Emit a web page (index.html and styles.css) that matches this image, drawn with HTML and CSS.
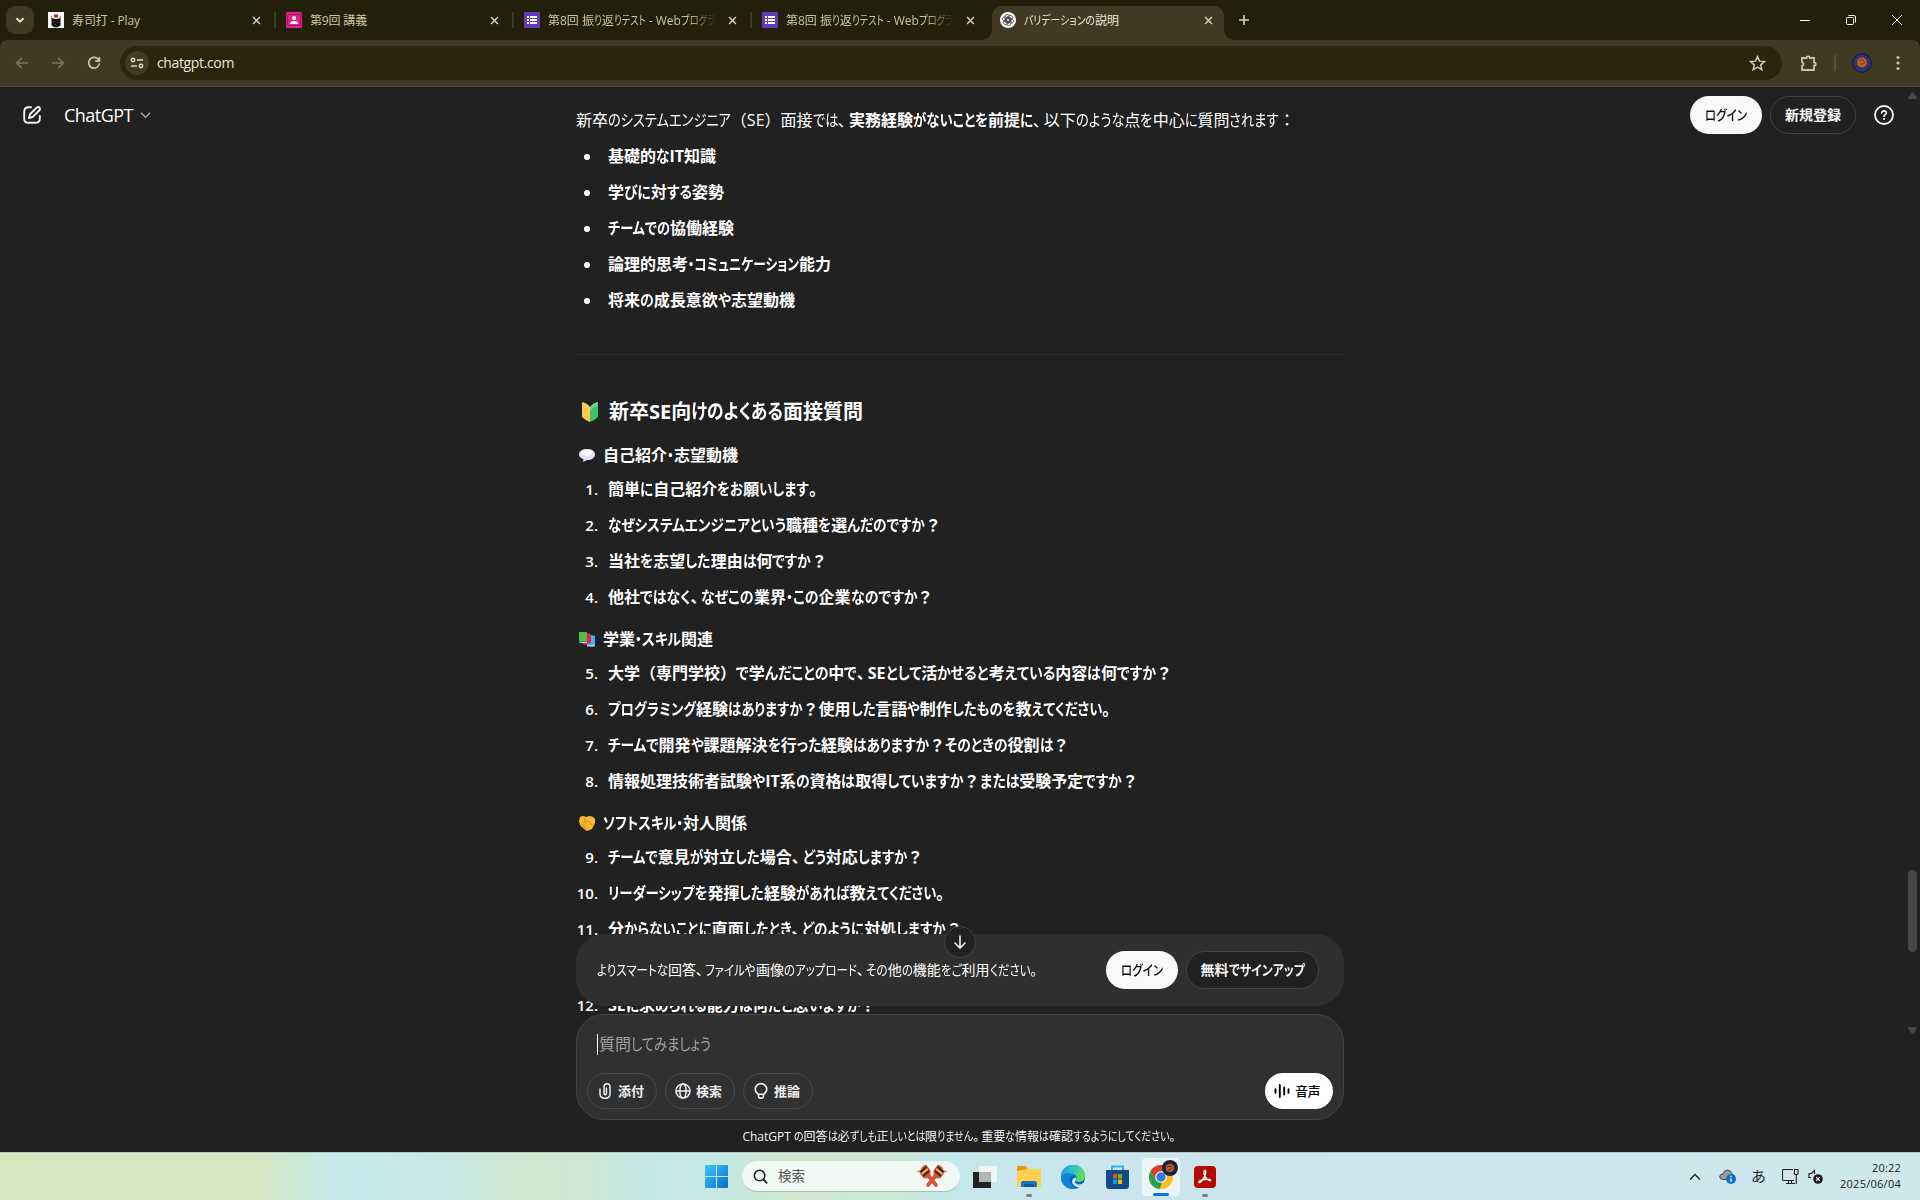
FILE: index.html
```html
<!DOCTYPE html>
<html lang="ja">
<head>
<meta charset="utf-8">
<title>バリデーションの説明</title>
<link rel="stylesheet" href="styles.css">
</head>
<body>
<div class="tabstrip">
  <div class="tab-search"><svg width="12" height="12" viewBox="0 0 12 12"><path d="M2.5 4.2 6 7.6l3.5-3.4" fill="none" stroke="#e8e3d0" stroke-width="2"/></svg></div>
  <div class="tab first">
    <svg class="fav" viewBox="0 0 16 16"><path fill="#fff" d="M0 0h16v16H0z"/><path fill="#111" d="M3.500 4q4.500-4 9 0v9.500q-4.500 4-9 0z"/><path fill="#f4f4f4" d="M4 3q4-3.500 8 0v3q-4 2-8 0z"/><path fill="#c22" d="M6 2.500h4v3H6z"/><path stroke="#555" d="M5 9l1 1m3 0 1 1m-3 1 1 1"/></svg>
    <span class="tab-title"><span data-w="68">寿司打 - Play</span></span><svg class="x" viewBox="0 0 10 10"><path d="M1.2 1.2l7.6 7.6m0-7.6L1.2 8.8"/></svg>
  </div>
  <div class="tab sep">
    <svg class="fav" viewBox="0 0 16 16"><rect width="16" height="16" rx="1.5" fill="#e0218a"/><path fill="none" stroke="#a8115f" d="M1.5 2.5h13v11h-13z"/><circle cx="8" cy="6" r="2" fill="#fff"/><path fill="#fff" d="M4 12q0-3 4-3t4 3z"/></svg>
    <span class="tab-title"><span data-w="57">第9回 講義</span></span><svg class="x" viewBox="0 0 10 10"><path d="M1.2 1.2l7.6 7.6m0-7.6L1.2 8.8"/></svg>
  </div>
  <div class="tab sep">
    <svg class="fav" viewBox="0 0 16 16"><rect width="16" height="16" rx="1" fill="#673ab7"/><path fill="#fff" d="M3 4h2v2H3zm3 0h7v2H6zM3 7h2v2H3zm3 0h7v2H6zM3 10h2v2H3zm3 0h7v2H6z"/></svg>
    <span class="tab-title fade"><span data-w="167">第8回 振り返りテスト - Webプログラ</span></span><svg class="x" viewBox="0 0 10 10"><path d="M1.2 1.2l7.6 7.6m0-7.6L1.2 8.8"/></svg>
  </div>
  <div class="tab sep">
    <svg class="fav" viewBox="0 0 16 16"><rect width="16" height="16" rx="1" fill="#673ab7"/><path fill="#fff" d="M3 4h2v2H3zm3 0h7v2H6zM3 7h2v2H3zm3 0h7v2H6zM3 10h2v2H3zm3 0h7v2H6z"/></svg>
    <span class="tab-title fade"><span data-w="167">第8回 振り返りテスト - Webプログラ</span></span><svg class="x" viewBox="0 0 10 10"><path d="M1.2 1.2l7.6 7.6m0-7.6L1.2 8.8"/></svg>
  </div>
  <div class="tab active">
    <svg class="fav" viewBox="0 0 16 16"><circle cx="8" cy="8" r="8" fill="#fff"/><g fill="none" stroke="#333" stroke-width=".7"><rect x="5" y="2.4" width="4.4" height="8" rx="2.2"/><rect x="5" y="2.4" width="4.4" height="8" rx="2.2" transform="rotate(60 8 8)"/><rect x="5" y="2.4" width="4.4" height="8" rx="2.2" transform="rotate(120 8 8)"/><rect x="5" y="2.4" width="4.4" height="8" rx="2.2" transform="rotate(180 8 8)"/><rect x="5" y="2.4" width="4.4" height="8" rx="2.2" transform="rotate(240 8 8)"/><rect x="5" y="2.4" width="4.4" height="8" rx="2.2" transform="rotate(300 8 8)"/></g></svg>
    <span class="tab-title"><span data-w="95">バリデーションの説明</span></span><svg class="x" viewBox="0 0 10 10"><path d="M1.2 1.2l7.6 7.6m0-7.6L1.2 8.8"/></svg>
  </div>
  <svg class="newtab" viewBox="0 0 12 12"><path d="M6 1v10M1 6h10"/></svg>
  <div class="wincontrols">
    <svg viewBox="0 0 10 10"><path d="M0 5.5h10"/></svg>
    <svg viewBox="0 0 10 10"><rect x=".5" y="2.5" width="7" height="7" rx="1"/><path d="M2.5.5H8a1.5 1.5 0 0 1 1.500 1.500V7.500"/></svg>
    <svg viewBox="0 0 10 10"><path d="M0 0l10 10M10 0L0 10"/></svg>
  </div>
</div>
<div class="toolbar-wrap">
<div class="toolbar">
  <svg class="nav dim" viewBox="0 0 16 16"><path d="M14 8H3M8 2.700 2.700 8 8 13.300"/></svg>
  <svg class="nav dim" viewBox="0 0 16 16"><path d="M2 8h11M8 2.700 13.300 8 8 13.300"/></svg>
  <svg class="nav" viewBox="0 0 16 16"><path d="M12.800 5.200A5.400 5.400 0 1 0 13.400 8.500M13.400 2v4.100H9.200" stroke-width="1.700"/></svg>
  <div class="omnibox">
    <div class="siteinfo"><svg width="14" height="12" viewBox="0 0 14 12"><g fill="none" stroke="#ded9c4" stroke-width="1.500"><circle cx="3" cy="3" r="1.700"/><path d="M7 3h6M1 9h6"/><circle cx="11" cy="9" r="1.700"/></g></svg></div>
    <span class="url" data-w="77">chatgpt.com</span>
    <svg class="star" viewBox="0 0 16 16"><path d="M8 1.500l1.900 4.300 4.700.4-3.600 3.100 1.100 4.600L8 11.500l-4.100 2.400L5 9.300 1.400 6.200l4.700-.4z"/></svg>
  </div>
  <svg class="ext" viewBox="0 0 18 18"><path d="M2 4h4.500a1.700 1.700 0 0 1 3.400 0H14v4.300a1.700 1.700 0 0 1 0 3.400V16H2v-4q3-2 0-4z"/></svg>
  <i class="bar"></i>
  <svg class="avatar" viewBox="0 0 20 20"><circle cx="10" cy="10" r="10" fill="#1d2035"/><circle cx="10" cy="10" r="8.500" fill="#2c3478"/><circle cx="10" cy="9.500" r="5" fill="#bd5f1d"/><path d="M7 8q3-3 5 0M8 11q3 1 5-2" stroke="#7d3010" fill="none"/></svg>
  <svg class="dots" viewBox="0 0 4 16"><circle cx="2" cy="2.500" r="1.600"/><circle cx="2" cy="8" r="1.600"/><circle cx="2" cy="13.500" r="1.600"/></svg>
</div>
</div>

<main class="page">
  <article class="answer">
    <p class="lead"><span data-w="270">新卒のシステムエンジニア（SE）面接では、</span><b data-w="184">実務経験がないことを前提に</b><span data-w="262">、以下のような点を中心に質問されます：</span></p>
    <ul>
      <li><b data-w="108">基礎的なIT知識</b></li>
      <li><b data-w="116">学びに対する姿勢</b></li>
      <li><b data-w="126">チームでの協働経験</b></li>
      <li><b data-w="223">論理的思考・コミュニケーション能力</b></li>
      <li><b data-w="187">将来の成長意欲や志望動機</b></li>
    </ul>
    <hr>
    <h3><svg class="mark" viewBox="0 0 18 20"><path fill="#fdc94c" d="M1 0q5 1 8 5v15q-4-1-8-5z"/><path fill="#3fc26b" d="M17 0q-5 1-8 5v15q4-1 8-5z"/><path fill="#64d58b" d="M17 0q-5 1-8 5v4q3-4 8-5z"/></svg><span data-w="254">新卒SE向けのよくある面接質問</span></h3>
    <h4><svg class="emo" viewBox="0 0 16 16"><path fill="#e7dff4" d="M8 2c5 0 8 2 8 5.500S12.500 13 8 13l-4 2 .5-2.700C1.500 11 0 9.500 0 7.500 0 4 3.500 2 8 2z"/><path fill="#fbf8ff" d="M8 3c3 0 5 1 5 3s-3 3-6 3-5-1-5-2.500S5 3 8 3z"/></svg><span data-w="135">自己紹介・志望動機</span></h4>
    <ol>
      <li><b data-w="209">簡単に自己紹介をお願いします。</b></li>
      <li><b data-w="333">なぜシステムエンジニアという職種を選んだのですか？</b></li>
      <li><b data-w="219">当社を志望した理由は何ですか？</b></li>
      <li><b data-w="325">他社ではなく、なぜこの業界・この企業なのですか？</b></li>
    </ol>
    <h4><svg class="emo" viewBox="0 0 16 16"><path fill="#55b947" d="M0 1h8v9H0z"/><path fill="#3d9b3f" d="M0 10h8v2H0z"/><path fill="#dc2456" d="M8 2l4 1v10l-7 1-2-2h5z"/><path fill="#3fb4ee" d="M12 4l4 1v9H8v-1l4-1z"/><path fill="#d5c8f0" d="M8 14h8v1.500H8zM1 11h7v1H2z"/></svg><span data-w="110">学業・スキル関連</span></h4>
    <ol start="5">
      <li><b data-w="564">大学（専門学校）で学んだことの中で、SEとして活かせると考えている内容は何ですか？</b></li>
      <li><b data-w="502">プログラミング経験はありますか？使用した言語や制作したものを教えてください。</b></li>
      <li><b data-w="461">チームで開発や課題解決を行った経験はありますか？そのときの役割は？</b></li>
      <li><b data-w="530">情報処理技術者試験やIT系の資格は取得していますか？または受験予定ですか？</b></li>
    </ol>
    <h4><svg class="emo" viewBox="0 0 16 16"><path fill="#fbb92f" d="M1 2q3-2 6 0l3-1q4 0 6 3v4l-3 6-5 2-3-2-4-4-1-4z"/><path fill="none" stroke="#c97d12" stroke-width=".8" d="M7 3 4.500 7q2 1 4-1.500l5 5M3 9l4 5M5 8.500l4 4"/></svg><span data-w="144">ソフトスキル・対人関係</span></h4>
    <ol start="9">
      <li><b data-w="315">チームで意見が対立した場合、どう対応しますか？</b></li>
      <li><b data-w="336">リーダーシップを発揮した経験があれば教えてください。</b></li>
      <li><b data-w="354">分からないことに直面したとき、どのように対処しますか？</b></li>
    </ol>
    <ol start="12" class="after">
      <li><b data-w="268">SEに求められる能力は何だと思いますか？</b></li>
    </ol>
  </article>

  <header class="top">
    <svg class="compose" viewBox="0 0 18 18"><g fill="none" stroke="#f2f2f2" stroke-width="1.900" stroke-linecap="round" stroke-linejoin="round"><path d="M8 1.300H5.500Q1.200 1.300 1.200 6v6.500q0 4.300 4.300 4.300H12q4.800 0 4.800-4.300V10"/><path d="M13.800 1.500q2-1 2.900.4.800 1.400-.5 2.600L9.800 10.900l-3.800 1.200 1-3.900z"/></g></svg>
    <span class="brand" data-w="69">ChatGPT</span>
    <svg class="chev" viewBox="0 0 12 8"><path d="M1 1.500l5 5 5-5" fill="none" stroke="#a8a8a8" stroke-width="1.400"/></svg>
    <span class="btn light push"><span data-w="42">ログイン</span></span>
    <span class="btn outline signup"><span data-w="56">新規登録</span></span>
    <svg class="help" viewBox="0 0 20 20"><circle cx="10" cy="10" r="9" fill="none" stroke="#f5f5f5" stroke-width="1.800"/><path d="M7.700 8q.2-2.200 2.400-2.200 2.200.1 2.200 2 0 1.200-1.300 1.900-1 .5-1 1.600" fill="none" stroke="#f5f5f5" stroke-width="1.700" stroke-linecap="round"/><circle cx="10" cy="14" r="1.100" fill="#f5f5f5"/></svg>
  </header>

  <div class="scrollbar"><svg width="9" height="7" viewBox="0 0 9 7"><path fill="#474747" d="M3.500.5h2L9 5.500 8.500 7h-8L0 5.500z"/></svg><i></i><svg width="9" height="7" viewBox="0 0 9 7"><path fill="#474747" d="M.5 0h8l.5 1.500L5.500 6.500h-2L0 1.500z"/></svg></div>

  <div class="dock">
    <div class="banner">
      <span class="note" data-w="440">よりスマートな回答、ファイルや画像のアップロード、その他の機能をご利用ください。</span>
      <span class="btn light"><span data-w="42">ログイン</span></span>
      <span class="btn outline free"><span data-w="104">無料でサインアップ</span></span>
      <span class="down"><svg width="14" height="14" viewBox="0 0 14 14"><path d="M7 .5v12M1.500 7.500 7 13l5.500-5.500" fill="none" stroke="#f5f5f5" stroke-width="1.600"/></svg></span>
    </div>
    <div class="composer">
      <div class="prompt"><i></i><span data-w="112">質問してみましょう</span></div>
      <div class="tools">
        <span class="tool"><svg width="16" height="16" viewBox="0 0 16 16"><path d="M3 6v5q0 4.200 5 4.200t5-4.200V4q0-3.200-3-3.200T7 4v6.500q0 1.200 1.200 1.200t1.200-1.200V5" fill="none" stroke="#f0f0f0" stroke-width="1.500" stroke-linecap="round"/></svg><span data-w="26">添付</span></span>
        <span class="tool"><svg width="16" height="16" viewBox="0 0 16 16"><g fill="none" stroke="#f0f0f0" stroke-width="1.500"><circle cx="8" cy="8" r="7"/><ellipse cx="8" cy="8" rx="3.200" ry="7"/><path d="M1 8h14"/></g></svg><span data-w="26">検索</span></span>
        <span class="tool"><svg width="16" height="16" viewBox="0 0 16 16"><path d="M5.200 11.300C4 10 2.200 8.800 2.200 6.200a5.800 5.500 0 0 1 11.600 0c0 2.600-1.800 3.800-3 5.100zM5.500 11v2.200q0 2 2.500 2t2.500-2V11" fill="none" stroke="#f0f0f0" stroke-width="1.600"/></svg><span data-w="26">推論</span></span>
        <span class="tool voice"><svg width="16" height="16" viewBox="0 0 16 16"><path d="M1.500 6.300v3.400M5.800 2v12M10.200 4.500v7M14.500 6.300v3.400" stroke="#000" stroke-width="1.900" stroke-linecap="round"/></svg><span data-w="25">音声</span></span>
      </div>
    </div>
    <div class="legal"><span data-w="433">ChatGPT の回答は必ずしも正しいとは限りません。重要な情報は確認するようにしてください。</span></div>
  </div>
</main>

<footer class="taskbar">
  <svg class="start" viewBox="0 0 23 23"><defs><linearGradient id="w" x1="0" y1="0" x2="1" y2="1"><stop offset="0" stop-color="#3fc8f8"/><stop offset="1" stop-color="#0a6cc8"/></linearGradient></defs><path fill="url(#w)" d="M0 1q0-1 1-1h10v11H0zM12 0h10q1 0 1 1v10H12zM0 12h11v11H1q-1 0-1-1zM12 12h11v10q0 1-1 1H12z"/></svg>
  <div class="search">
    <svg class="mag" viewBox="0 0 16 16"><circle cx="7" cy="7" r="5.600" fill="none" stroke="#222" stroke-width="1.700"/><path d="M11 11l4 4.300" stroke="#222" stroke-width="2"/></svg>
    <span data-w="27">検索</span>
    <svg class="forks" viewBox="0 0 32 24"><g stroke-linecap="round" stroke-linejoin="round"><path stroke="#d8503c" stroke-width="3.600" d="M13 12.500l7 8.500M19 12.500L12 21"/><path fill="#d8503c" stroke="#d8503c" d="M1.500 7.500l3-.5M7 2.500l3-1.500 4 5.500v7l-6 .5-4-5zM30.500 7.500l-3-.5M25 2.500L22 1l-4 5.500v7l6 .5 4-5z"/></g><path stroke="#2d2620" stroke-width="2" d="M4.500 8l6-5M7 12l6-5M27.500 8l-6-5M25 12l-6-5"/><path stroke="#f0b02e" stroke-width="1.800" d="M5.700 10l6-5M26.300 10l-6-5"/></svg>
  </div>
  <div class="app"><svg width="24" height="22" viewBox="0 0 24 22"><path fill="#222" d="M0 6h18v16H0z"/><path fill="#f4f4f4" d="M6 0h18v16H6z"/><path fill="#b4b6b6" d="M6 6h12v10H6z"/></svg></div>
  <div class="app run"><svg width="24" height="22" viewBox="0 0 24 22"><path fill="#e19b13" d="M0 1q0-1 1-1h8l2 3v4H0z"/><path fill="#ffd04d" d="M0 5l10-2h13q1 0 1 1v17H0z"/><path fill="#1675c4" d="M4 21v-4q0-2 2-2h12q2 0 2 2v4z"/><path fill="#0e56a0" d="M7 18h10v3H7z"/></svg></div>
  <div class="app"><svg width="24" height="24" viewBox="0 0 24 24"><defs><linearGradient id="e" x1="0" y1="0" x2="1" y2=".3"><stop offset="0" stop-color="#1b9de2"/><stop offset=".6" stop-color="#2fc6c4"/><stop offset="1" stop-color="#64dc55"/></linearGradient></defs><circle cx="12" cy="12" r="12" fill="#0b65b8"/><path fill="url(#e)" d="M0 12A12 12 0 0 1 24 11c0 5-4 6-7 6-2 0-3-1-2-2 2-4-1-6-4-6-5 0-9 3-11 3z"/><path fill="#0f83d6" d="M0 12c2-5 12-5 14-1-5-2-7 4-4 8 1 2 4 4 6 4C7 26 0 20 0 12z"/><path fill="#cfe5ee" d="M14.500 15.500q-2 2 1.500 3.500 4 1.500 7-1.500L24 20l-4 3q-8-1-9-6 0-4 4-4.500 1 1.500-.5 3z"/></svg></div>
  <div class="app"><svg width="23" height="24" viewBox="0 0 23 24"><path fill="none" stroke="#2bb3ee" stroke-width="2" d="M6 6V1.500h11V6"/><path fill="#154a86" d="M0 5h23v16q0 3-3 3H3q-3 0-3-3z"/><path fill="#f25022" d="M7 9h4v4.500H7z"/><path fill="#7fba00" d="M12 9h4v4.500h-4z"/><path fill="#00a4ef" d="M7 14.500h4V19H7z"/><path fill="#ffb900" d="M12 14.500h4V19h-4z"/></svg></div>
  <div class="app tile"><svg width="24" height="24" viewBox="0 0 24 24"><circle cx="12" cy="12" r="12" fill="#fbc116"/><path fill="#e33b2e" d="M1.600 6A12 12 0 0 1 22.400 6H12L7 15z"/><path fill="#27a24c" d="M1.600 6 7 15l6 3-2.500 6A12 12 0 0 1 1.600 6z"/><circle cx="12" cy="12" r="5.800" fill="#fff"/><circle cx="12" cy="12" r="4.700" fill="#3479e8"/></svg>
    <svg class="badge" width="16" height="16" viewBox="0 0 16 16"><circle cx="8" cy="8" r="8" fill="#1c2144"/><circle cx="8" cy="8" r="4.300" fill="#b65c28"/><path d="M5 7q3-2 5 0M6 10q3 0 4-2" stroke="#6e2f12" fill="none"/></svg></div>
  <div class="app run"><svg width="22" height="22" viewBox="0 0 22 22"><rect width="22" height="22" rx="4" fill="#b30b00"/><path d="M10.500 4.500q2-.5 1 3.500Q9.500 14 6 16.500q-2 .5-.5-1.500Q9 12.500 16 13.500q1.500 1-.5 1.200-3.500-1.200-5.500-7-.2-2.500.5-3.200z" fill="none" stroke="#fff" stroke-width="1.400"/></svg></div>
  <div class="tray">
    <svg class="t1" width="12" height="8" viewBox="0 0 12 8"><path d="M1 6.500l5-5 5 5" fill="none" stroke="#222" stroke-width="1.400"/></svg>
    <svg class="t2" width="17" height="15" viewBox="0 0 17 15"><path d="M4 10.500Q.5 10.500.7 7.500 1 5 4 5 5 1 9 1.200q3 .3 4 3.300l2 2-4 4z" fill="#9b9b9b" stroke="#444"/><circle cx="12" cy="10" r="5" fill="#0a6fd0"/><path d="M12 9.500v3.200M12 6.700v1.500" stroke="#fff" stroke-width="1.500"/></svg>
    <span class="ime">あ</span>
    <svg class="t3" width="17" height="17" viewBox="0 0 17 17"><path d="M11 1.500H1.500q-1 0-1 1v9q0 1 1 1H12M4 15.500h9M6.500 12.500v3M9.500 12.500v3M12.500 1.500h3.500v4q0 1-1 1h-1.500q-1 0-1-1zM14.300 6.500v9.500" fill="none" stroke="#222" stroke-width="1.100"/></svg>
    <svg class="t4" width="15" height="15" viewBox="0 0 15 15"><path d="M6.500 5V1.500L3.500 4.500H1v4h2" fill="none" stroke="#222" stroke-width="1.200"/><circle cx="10" cy="10" r="4.800" fill="#1d1d1d"/><path d="M8.200 8.200l3.600 3.600m0-3.600-3.600 3.600" stroke="#fff" stroke-width="1.200"/></svg>
    <div class="clock"><span data-w="29">20:22</span><span data-w="61">2025/06/04</span></div>
  </div>
</footer>
<script src="kerning.js"></script>
</body>
</html>
```
FILE: styles.css
```css
* { box-sizing: border-box; }
body {
  margin: 0; width: 1920px; height: 1200px; overflow: hidden;
  display: flex; flex-direction: column;
  font-family: "Open Sans", "Noto Sans CJK JP", sans-serif;
  background: #212121; color: #fff;
}
svg { display: block; flex: none; }
[data-w] { white-space: nowrap; letter-spacing: var(--gap, 0px); }
/* kana are set narrower than kanji */
.kana { display: inline-block; font-feature-settings: "palt"; transform-origin: 0 50%; }
.stop { font-feature-settings: "palt"; margin-right: .18em; }

/* tab strip */
.tabstrip { height: 40px; background: #22200b; display: flex; align-items: center; padding-left: 6px; font-size: 12px; color: #cbc49d; }
.tab-search { width: 28px; height: 28px; border-radius: 9px; background: #403a24; display: grid; place-items: center; margin-top: -1px; }
.tab { width: 238px; height: 34px; margin-top: 0; display: flex; align-items: center; padding-left: 12px; position: relative; }
.tab.first { margin-left: 2px; }
.tab.sep::before { content: ""; position: absolute; left: 0; top: 9px; width: 2px; height: 16px; background: #403a24; }
.fav { width: 16px; height: 16px; margin-right: 8px; }
.tab-title { width: 168px; overflow: hidden; white-space: nowrap; line-height: 20px; padding-top: 1px; }
.fade { -webkit-mask-image: linear-gradient(90deg, #000 84%, transparent); mask-image: linear-gradient(90deg, #000 84%, transparent); }
.x { width: 9px; height: 9px; margin-left: 12px; stroke: #d8d2b4; stroke-width: 1.600; fill: none; }
.tab.active { width: 232px; height: 34px; align-self: flex-end; margin-left: 4px; padding: 0 0 6px 8px; background: #403a24; border-radius: 10px 10px 0 0; color: #ebe6d2; }
.tab.active::before, .tab.active::after { content: ""; position: absolute; bottom: 0; width: 10px; height: 10px; }
.tab.active::before { left: -10px; background: radial-gradient(circle at 0 0, transparent 9.500px, #403a24 10px); }
.tab.active::after { right: -10px; background: radial-gradient(circle at 100% 0, transparent 9.500px, #403a24 10px); }
.newtab { width: 12px; height: 12px; margin-left: 14px; stroke: #d8d2b4; stroke-width: 1.600; }
.wincontrols { margin-left: auto; display: flex; gap: 36px; padding-right: 18px; }
.wincontrols svg { width: 10px; height: 10px; fill: none; stroke: #fff; stroke-width: 1; overflow: visible; }

/* toolbar */
.toolbar-wrap { background: #22200b; }
.toolbar { height: 47px; background: #403a24; border-bottom: 1px solid #4f4933; border-radius: 8px 8px 0 0; display: flex; align-items: center; padding-left: 14px; }
.nav { width: 16px; height: 16px; margin-right: 20px; fill: none; stroke: #cbc49d; stroke-width: 1.600; }
.nav.dim { stroke: #7f775c; }
.omnibox { width: 1662px; height: 34px; margin-left: -2px; border-radius: 17px; background: #2c240e; display: flex; align-items: center; padding-left: 5px; }
.siteinfo { width: 24px; height: 24px; border-radius: 50%; background: #403a24; display: grid; place-items: center; }
.url { margin-left: 8px; font-size: 14px; color: #ebe6d2; line-height: 20px; }
.star { width: 17px; height: 17px; margin-left: auto; margin-right: 16px; fill: none; stroke: #d0cab0; stroke-width: 1.400; }
.ext { width: 18px; height: 18px; margin-left: 18px; fill: none; stroke: #cbc49d; stroke-width: 1.800; }
.bar { width: 2px; height: 16px; margin-left: 16px; background: #565034; }
.avatar { width: 20px; height: 20px; margin-left: 16px; }
.dots { width: 4px; height: 16px; margin-left: 24px; fill: #cbc49d; }

/* conversation */
.page { height: 1065px; position: relative; overflow: hidden; }
.answer { width: 768px; margin: 0 auto; padding-top: 15px; font-size: 16px; line-height: 36px; }
.answer p, .answer ul, .answer ol, .answer h3, .answer h4 { margin: 0; }
.lead { white-space: nowrap; }
.answer ul, .answer ol { padding-left: 32px; }
.answer ul { list-style: none; }
.answer ul li { display: flex; align-items: center; }
.answer ul li::before { content: ""; width: 6px; height: 6px; border-radius: 50%; background: #fff; margin: 2px 18px 0 -24px; }
.answer li { height: 36px; }
.answer ol li::marker { content: counter(list-item) ".\2002\2009"; font-weight: 600; font-size: 15px; }
.answer ol { margin-bottom: 9px; }
.answer b { font-weight: 700; }
hr { border: 0; height: 1px; background: #303030; margin: 36px 0 43px; }
h3 { font-size: 20px; line-height: 28px; display: flex; align-items: center; }
.mark { width: 18px; height: 20px; margin: 0 10px 0 5px; }
h4 { font-size: 16px; line-height: 30px; display: flex; align-items: center; }
.answer h3 { margin-bottom: 14px; }
.answer h4 { margin-bottom: 1px; }
.emo { width: 16px; height: 16px; margin: 0 8px 0 3px; }
.answer .after { margin-top: 40px; }

.top { position: absolute; left: 0; right: 0; top: 0; height: 56px; display: flex; align-items: center; padding: 0 26px 0 23px; }
.compose { width: 18px; height: 18px; }
.brand { margin-left: 23px; font-size: 18px; }
.chev { width: 11px; height: 8px; margin-left: 7px; }
.btn { height: 38px; border-radius: 19px; display: grid; place-items: center; font-size: 14px; font-weight: 700; line-height: 20px; }
.light { width: 72px; background: #f9f9f9; color: #0d0d0d; font-weight: 500; }
.outline { border: 1px solid #424242; background: #212121; color: #f5f5f5; margin-left: 8px; }
.push { margin-left: auto; }
.signup { width: 86px; }
.help { width: 20px; height: 20px; margin-left: 18px; }
.free { width: 133px; }

.scrollbar { position: absolute; right: 3px; top: 5px; height: 942px; display: flex; flex-direction: column; }
.scrollbar i { width: 9px; height: 82px; border-radius: 5px; background: #474747; margin-top: 771px; margin-bottom: auto; }

/* bottom dock */
.dock { position: absolute; left: 576px; top: 847px; width: 768px; display: flex; flex-direction: column; }
.banner { height: 72px; border-radius: 28px; background: #2f2f2f; display: flex; align-items: center; padding: 0 25px 0 21px; position: relative; font-size: 14px; }
.note { margin-right: auto; padding-bottom: 2px; }
.down { position: absolute; left: 368px; top: -8px; width: 32px; height: 32px; border-radius: 50%; background: #212121; border: 1px solid #424242; display: grid; place-items: center; }
.composer { margin-top: 8px; height: 106px; border: 1px solid #454545; border-radius: 28px; background: #303030; padding: 17px 10px 10px; display: flex; flex-direction: column; justify-content: space-between; }
.prompt { display: flex; align-items: center; height: 24px; padding-left: 10px; font-size: 16px; color: #a2a2a2; line-height: 24px; }
.prompt i { width: 1px; height: 21px; background: #fff; margin-right: 1px; }
.tools { display: flex; gap: 8px; }
.tool { width: 70px; height: 36px; border: 1px solid #4a4a4a; border-radius: 18px; display: flex; align-items: center; padding-left: 9px; gap: 5px; font-size: 13px; line-height: 18px; font-weight: 700; color: #f0f0f0; }
.tool span { padding-bottom: 1px; }
.voice { width: 68px; margin-left: auto; background: #fff; border: 0; color: #000; font-weight: 500; }
.legal { height: 32px; display: grid; place-items: center; padding-top: 2px; background: #212121; font-size: 12px; color: #f4f4f4; line-height: 16px; }

/* taskbar */
.taskbar { height: 48px; border-top: 1px solid #b5c4c6; display: flex; align-items: center; padding-left: 705px;
  background: linear-gradient(90deg, #d5e7bd 0, #d4e7c3 260px, #c4ecee 345px, #c7e8e8 430px, #cfe7cd 530px, #cde7d2 590px, #c2e8e9 650px, #c5e8e3 720px, #cfe7cd 790px, #cde7d2 890px, #c2e8ea 940px, #cce5ed 1100px, #cfe8ee 1920px); }
.start { width: 23px; height: 23px; }
.search { width: 218px; height: 31px; margin-left: 14px; margin-right: 6px; border-radius: 16px; background: rgba(247, 251, 248, .88); border-bottom: 1px solid #a9bfb8; display: flex; align-items: center; padding-left: 11px; font-size: 13.500px; line-height: 20px; color: #555; }
.mag { width: 15px; height: 15px; margin-right: 10px; }
.search span { padding-bottom: 1px; }
.forks { width: 32px; height: 24px; margin-left: auto; margin-right: 12px; }
.app { width: 38px; height: 38px; margin-right: 6px; display: grid; place-items: center; position: relative; }
.run::after { content: ""; position: absolute; left: 16px; bottom: -1px; width: 6px; height: 3px; border-radius: 2px; background: #74828a; }
.tile { background: rgba(255, 255, 255, .6); border-radius: 4px; }
.tile::after { content: ""; position: absolute; left: 11px; bottom: 0; width: 16px; height: 3px; border-radius: 2px; background: #0078d4; }
.badge { position: absolute; right: 2px; top: 2px; }
.tray { margin-left: auto; padding-right: 19px; display: flex; align-items: center; color: #222; }
.t2 { margin-left: 18px; }
.ime { margin-left: 15px; width: 15px; font-size: 15px; line-height: 20px; padding-bottom: 2px; }
.t3 { margin-left: 16px; }
.t4 { margin-left: 9px; }
.clock { margin-left: 16px; width: 62px; font-size: 11px; line-height: 16px; display: flex; flex-direction: column; align-items: flex-end; padding-bottom: 1px; }
```
FILE: kerning.js
```js
// Narrows the kana of each label so that it sets at the width given in data-w.
function textWidth(el) {
  var range = document.createRange();
  range.selectNodeContents(el);
  return range.getBoundingClientRect().width;
}
document.querySelectorAll("[data-w]").forEach(function (el) {
  el.innerHTML = el.textContent
    .replace(/[\u3041-\u30ff]+/g, '<span class="kana">$&</span>')
    .replace(/[\u3001\u3002]/g, '<span class="stop">$&</span>');
  var runs = Array.from(el.querySelectorAll(".kana"));
  var diff = Number(el.dataset.w) - textWidth(el);
  if (!runs.length) {
    el.style.setProperty("--gap", diff / el.textContent.length + "px");
    return;
  }
  var widths = runs.map(function (run) { return run.getBoundingClientRect().width; });
  var total = widths.reduce(function (a, b) { return a + b; }, 0);
  var scale = (total + diff) / total;
  runs.forEach(function (run, i) {
    run.style.transform = "scaleX(" + scale + ")";
    run.style.marginRight = widths[i] * (scale - 1) + "px";
  });
});
```
